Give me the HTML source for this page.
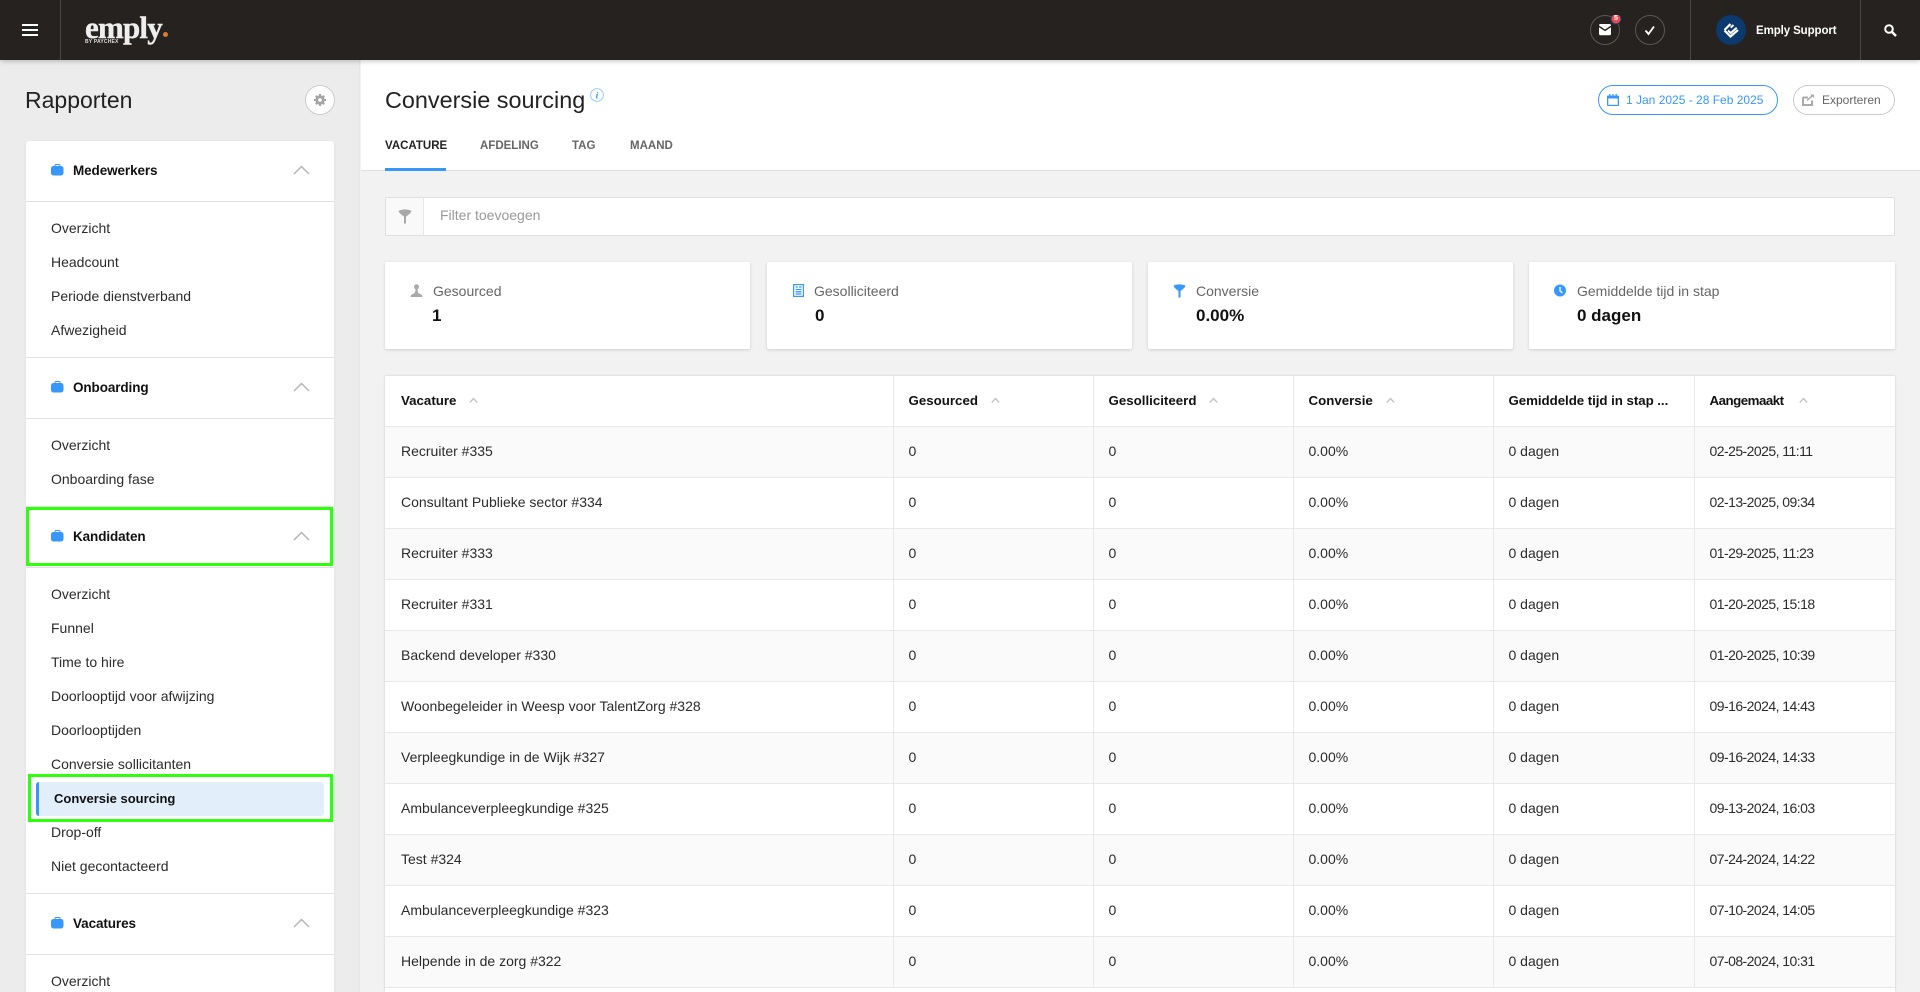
<!DOCTYPE html>
<html lang="nl"><head><meta charset="utf-8"><title>Conversie sourcing</title>
<style>
*{box-sizing:border-box}
html,body{margin:0;padding:0;width:1920px;height:992px;overflow:hidden;background:#f2f2f2;font-family:"Liberation Sans",Arial,sans-serif;color:#2b2b2b}
#root{position:relative;width:1920px;height:992px;overflow:hidden}
.a{position:absolute}
.t{position:absolute;white-space:nowrap;line-height:20px;height:20px}
#top{left:0;top:0;width:1920px;height:60px;background:#26221f;box-shadow:0 1px 5px rgba(0,0,0,.25);z-index:5}
.vd{position:absolute;top:0;width:1px;height:60px;background:#4a4643}
#side{left:0;top:60px;width:360px;height:932px;background:#ececec;border-right:1px solid #e6e6e6}
#card{left:26px;top:141px;width:308px;height:851px;background:#fff;border-radius:3px 3px 0 0;box-shadow:0 1px 2px rgba(0,0,0,.08)}
.hr{position:absolute;left:26px;width:308px;height:1px;background:#e2e2e2}
.it{position:absolute;left:51px;font-size:14px;white-space:nowrap;line-height:20px;height:20px;color:#2b2b2b}
.sh{position:absolute;left:73px;font-size:13.5px;letter-spacing:-.1px;font-weight:700;color:#111;white-space:nowrap;line-height:20px;height:20px;margin-top:1px}
.g{position:absolute;border:3px solid #2eff0a;z-index:3}
#head{left:361px;top:60px;width:1559px;height:111px;background:#fff;border-bottom:1px solid #e0e0e0}
.tab{position:absolute;top:136px;font-size:11.5px;font-weight:700;color:#666;line-height:20px;height:20px;white-space:nowrap}
.pill{position:absolute;top:85px;height:30px;border-radius:15px;background:#fff}
.sc{position:absolute;top:262px;height:87px;width:365px;background:#fff;border-radius:2px;box-shadow:0 1px 3px rgba(0,0,0,.15)}
.sl{position:absolute;top:281px;font-size:14px;color:#666;white-space:nowrap;line-height:20px}
.sv{position:absolute;top:305px;font-size:17px;font-weight:700;color:#111;white-space:nowrap;line-height:22px}
#tb{left:385px;top:376px;width:1510px;height:616px;background:#fff;box-shadow:0 0 2px rgba(0,0,0,.18)}
table{position:absolute;left:385px;top:376px;width:1510px;border-collapse:collapse;table-layout:fixed;font-size:14px}
th,td{padding:0 15px;text-align:left;border-bottom:1px solid #e8e8e8;border-right:1px solid #e8e8e8;white-space:nowrap;overflow:hidden}
th:first-child,td:first-child{padding-left:16px}
th{height:50px;font-size:13.3px;font-weight:700;color:#111}
td{height:51px;color:#2b2b2b;padding-bottom:1px}
td:last-child{letter-spacing:-.55px}
th:last-child{letter-spacing:-.5px}
th:last-child svg{margin-left:15px}
td:last-child,th:last-child{border-right:none}
tbody tr:nth-child(odd){background:#fafafa}
th svg{margin-left:13px;vertical-align:1px}
</style></head><body><div id="root">

<div id="top" class="a">
<div class="a" style="left:22px;top:24px;width:16px;height:2px;background:#fff"></div>
<div class="a" style="left:22px;top:29px;width:16px;height:2px;background:#fff"></div>
<div class="a" style="left:22px;top:34px;width:16px;height:2px;background:#fff"></div>
<div class="vd" style="left:60px"></div>
<div class="t" style="left:85px;top:11px;font:700 31px/34px 'Liberation Serif',serif;height:34px;color:#eee;letter-spacing:-.8px;-webkit-text-stroke:.4px #eee">emply</div>
<div class="a" style="left:163px;top:32px;width:5px;height:5px;border-radius:50%;background:#de7a35"></div>
<div class="t" style="left:85px;top:39px;font-size:5px;font-weight:700;line-height:6px;height:6px;color:#ddd;letter-spacing:.2px">BY PAYCHEX</div>

<svg class="a" style="left:1590px;top:15px" width="90" height="30" viewBox="0 0 90 30"><circle cx="15" cy="15" r="14.500" fill="none" stroke="#5b5753"/><circle cx="60" cy="15" r="14.500" fill="none" stroke="#5b5753"/><path d="M9 10.500q0-1.500 1.500-1.500h9q1.500 0 1.500 1.500L15 14.500z" fill="#fff"/><path d="M9 12.300L15 16.300l6-4V19q0 1.200-1.500 1.200h-9Q9 20.200 9 19z" fill="#fff"/><path d="M55.500 15.500l3 3.500 5.500-7.500" fill="none" stroke="#fff" stroke-width="1.800"/><circle cx="26" cy="4" r="5" fill="#ee4a55" stroke="#1f3d63"/></svg>
<div class="t" style="left:1613px;top:15px;width:6px;font-size:7px;font-weight:700;line-height:8px;height:8px;color:#fff;text-align:center">5</div>
<div class="vd" style="left:1690px"></div>
<svg class="a" style="left:1716px;top:15px" width="30" height="30" viewBox="0 0 30 30"><circle cx="15" cy="15" r="15" fill="#0c3a6e"/><path d="M8.500 15L14.500 9M8.500 15.500L14.500 21.500 22 15" fill="none" stroke="#fff" stroke-width="2.200"/><path d="M12 15.500l2.700 2.500 6-5.200M14.700 12.600L17.500 10" fill="none" stroke="#fff" stroke-width="2"/></svg>
<div class="t" style="left:1756px;top:21px;font-size:11.500px;font-weight:700;color:#fff;letter-spacing:-.1px">Emply Support</div>
<div class="vd" style="left:1860px"></div>
<svg class="a" style="left:1884px;top:24px" width="13" height="13" viewBox="0 0 13 13"><circle cx="5" cy="5" r="3.800" fill="none" stroke="#fff" stroke-width="2"/><path d="M8 8l4 4" stroke="#fff" stroke-width="2.500"/></svg>
</div>

<div id="side" class="a"></div>
<div class="t" style="left:25px;top:85px;height:30px;line-height:30px;font-size:23px;color:#222">Rapporten</div>
<div class="a" style="left:305px;top:85px;width:30px;height:30px;border-radius:50%;background:#fff;border:1px solid #ccc"></div>
<svg class="a" style="left:314px;top:94px" width="12" height="12" viewBox="0 0 12 12"><circle cx="6" cy="6" r="3.200" fill="none" stroke="#a5a5a5" stroke-width="2.800"/><path d="M6 0v2.500M6 9.500V12M0 6h2.500M9.500 6H12M1.800 1.800l1.800 1.800M8.400 8.400l1.800 1.800M10.200 1.800L8.400 3.600M3.600 8.400l-1.800 1.800" stroke="#a5a5a5" stroke-width="2.200"/></svg>

<div id="card" class="a"></div>
<div class="hr" style="top:201px"></div><div class="hr" style="top:357px"></div><div class="hr" style="top:418px"></div><div class="hr" style="top:506px"></div><div class="hr" style="top:567px"></div><div class="hr" style="top:893px"></div><div class="hr" style="top:954px"></div>

<svg width="0" height="0" style="position:absolute"><defs>
<g id="bag"><path d="M4 2.500V1.500Q4 .5 5 .5h3q1 0 1 1v1" fill="none" stroke="#3797fb" stroke-width="1"/><rect x="0" y="2" width="12.500" height="9.500" rx="2.500" fill="#3797fb"/></g>
<g id="chev"><path d="M1 9L8.500 1.500 16 9" fill="none" stroke="#b5b5b5" stroke-width="1.500"/></g>
<g id="sort"><path d="M.8 5.500L4.500 1.500 8.200 5.500" fill="none" stroke="#c4c4c4" stroke-width="1.400"/></g>
</defs></svg>

<svg class="a" style="left:51px;top:164px" width="13" height="12"><use href="#bag"/></svg><div class="sh" style="top:160px">Medewerkers</div><svg class="a" style="left:293px;top:165px" width="17" height="10"><use href="#chev"/></svg>
<div class="it" style="top:218px">Overzicht</div><div class="it" style="top:252px">Headcount</div><div class="it" style="top:286px">Periode dienstverband</div><div class="it" style="top:320px">Afwezigheid</div>
<svg class="a" style="left:51px;top:381px" width="13" height="12"><use href="#bag"/></svg><div class="sh" style="top:377px">Onboarding</div><svg class="a" style="left:293px;top:382px" width="17" height="10"><use href="#chev"/></svg>
<div class="it" style="top:435px">Overzicht</div><div class="it" style="top:469px">Onboarding fase</div>
<svg class="a" style="left:51px;top:530px" width="13" height="12"><use href="#bag"/></svg><div class="sh" style="top:526px">Kandidaten</div><svg class="a" style="left:293px;top:531px" width="17" height="10"><use href="#chev"/></svg>
<div class="it" style="top:584px">Overzicht</div><div class="it" style="top:618px">Funnel</div><div class="it" style="top:652px">Time to hire</div><div class="it" style="top:686px">Doorlooptijd voor afwijzing</div><div class="it" style="top:720px">Doorlooptijden</div><div class="it" style="top:754px">Conversie sollicitanten</div>
<div class="a" style="left:36px;top:782px;width:288px;height:34px;background:#e2effb;border-radius:3px;border-left:3px solid #3797fb"></div>
<div class="it" style="left:54px;top:789px;font-weight:700;color:#111;font-size:13px">Conversie sourcing</div>
<div class="it" style="top:822px">Drop-off</div><div class="it" style="top:856px">Niet gecontacteerd</div>
<svg class="a" style="left:51px;top:917px" width="13" height="12"><use href="#bag"/></svg><div class="sh" style="top:913px">Vacatures</div><svg class="a" style="left:293px;top:918px" width="17" height="10"><use href="#chev"/></svg>
<div class="it" style="top:971px">Overzicht</div>
<div class="g" style="left:26px;top:507px;width:307px;height:59px"></div>
<div class="g" style="left:28px;top:774px;width:305px;height:48px"></div>

<div id="head" class="a"></div>
<div class="t" style="left:385px;top:85px;height:30px;line-height:30px;font-size:23.400px;color:#222">Conversie sourcing</div>
<svg class="a" style="left:590px;top:88px" width="14" height="14" viewBox="0 0 14 14"><circle cx="7" cy="7" r="6.400" fill="#fff" stroke="#9ccafa"/><text x="7" y="10.500" text-anchor="middle" font-size="9.500" font-weight="700" font-style="italic" font-family="Liberation Serif" fill="#3797fb">i</text></svg>
<div class="tab" style="left:385px;color:#222">VACATURE</div><div class="tab" style="left:480px">AFDELING</div><div class="tab" style="left:572px">TAG</div><div class="tab" style="left:630px">MAAND</div>
<div class="a" style="left:385px;top:168px;width:61px;height:3px;background:#3797fb"></div>

<div class="pill" style="left:1598px;width:180px;border:1px solid #3797fb"></div>
<svg class="a" style="left:1607px;top:94px" width="12" height="12" viewBox="0 0 12 12"><path d="M0 2.500Q0 1.500 1 1.500h10q1 0 1 1V11q0 1-1 1H1q-1 0-1-1z" fill="#3797fb"/><rect x="1.300" y="4.500" width="9.400" height="6.300" fill="#fff"/><path d="M2.800 0v2.500M6 0v2.500M9.200 0v2.500" stroke="#3797fb" stroke-width="1.200"/></svg>
<div class="t" style="left:1626px;top:90px;font-size:12px;color:#3797fb">1 Jan 2025 - 28 Feb 2025</div>
<div class="pill" style="left:1793px;width:102px;border:1px solid #ccc"></div>
<svg class="a" style="left:1802px;top:94px" width="12" height="12" viewBox="0 0 12 12"><path d="M1 3.500h5M1 3v8h9V6.500" fill="none" stroke="#aaa" stroke-width="2"/><path d="M5 6.500L10 2" stroke="#aaa" stroke-width="1.500"/><path d="M8 .5h4v3.500z" fill="#aaa"/></svg>
<div class="t" style="left:1822px;top:90px;font-size:12px;color:#666">Exporteren</div>

<div class="a" style="left:385px;top:197px;width:1510px;height:39px;background:#fff;border:1px solid #dfdfdf;border-radius:2px"></div>
<div class="a" style="left:386px;top:198px;width:38px;height:37px;background:#f9f9f9;border-right:1px solid #e6e6e6"></div>
<svg class="a" style="left:398px;top:209px" width="14" height="15" viewBox="0 0 14 15"><path d="M.5 1.800Q7-1 13.500 1.800Q13 4.500 8 7.500V14.500H6V7.500Q1 4.500.5 1.800z" fill="#a8a8a8"/></svg>
<div class="t" style="left:440px;top:205px;font-size:14px;color:#999">Filter toevoegen</div>

<div class="sc" style="left:385px"></div><div class="sc" style="left:767px"></div><div class="sc" style="left:1148px"></div><div class="sc" style="left:1529px;width:366px"></div>
<svg class="a" style="left:410px;top:284px" width="13" height="13" viewBox="0 0 13 13"><circle cx="6.500" cy="2.800" r="2.500" fill="#aaa"/><path d="M0.500 13Q0.500 10.500 4 9.500Q5.500 8.500 5.500 5h2Q7.500 8.500 9 9.500 12.500 10.500 12.500 13z" fill="#aaa"/></svg>
<div class="sl" style="left:433px">Gesourced</div><div class="sv" style="left:432px">1</div>
<svg class="a" style="left:793px;top:284px" width="11" height="13" viewBox="0 0 11 13"><rect x=".6" y=".6" width="9.800" height="11.800" fill="none" stroke="#3797fb" stroke-width="1.200"/><path d="M2.500 3h2.200M6 3h2.500M2.500 5.500h6M2.500 7.800h6M2.500 10h6" stroke="#3797fb" stroke-width="1.300"/></svg>
<div class="sl" style="left:814px">Gesolliciteerd</div><div class="sv" style="left:815px">0</div>
<svg class="a" style="left:1173px;top:284px" width="13" height="14" viewBox="0 0 13 14"><path d="M.5 1.500Q6.500-.8 12.500 1.500Q12 4 7.500 7V13.500H5.500V7Q1 4 .5 1.500z" fill="#3797fb"/></svg>
<div class="sl" style="left:1196px">Conversie</div><div class="sv" style="left:1196px">0.00%</div>
<svg class="a" style="left:1554px;top:284px" width="12" height="13" viewBox="0 0 12 13"><circle cx="6" cy="6.500" r="6" fill="#3797fb"/><path d="M6 3v4l2.500 2" fill="none" stroke="#fff" stroke-width="1.300"/></svg>
<div class="sl" style="left:1577px">Gemiddelde tijd in stap</div><div class="sv" style="left:1577px">0 dagen</div>

<div id="tb" class="a"></div>
<table><colgroup><col style="width:508px"><col style="width:200px"><col style="width:200px"><col style="width:200px"><col style="width:201px"><col style="width:201px"></colgroup>
<thead><tr>
<th>Vacature<svg width="9" height="7"><use href="#sort"/></svg></th>
<th>Gesourced<svg width="9" height="7"><use href="#sort"/></svg></th>
<th>Gesolliciteerd<svg width="9" height="7"><use href="#sort"/></svg></th>
<th>Conversie<svg width="9" height="7"><use href="#sort"/></svg></th>
<th style="letter-spacing:-.05px">Gemiddelde tijd in stap ...</th>
<th>Aangemaakt<svg width="9" height="7"><use href="#sort"/></svg></th>
</tr></thead>
<tbody>
<tr><td>Recruiter #335</td><td>0</td><td>0</td><td>0.00%</td><td>0 dagen</td><td>02-25-2025, 11:11</td></tr>
<tr><td>Consultant Publieke sector #334</td><td>0</td><td>0</td><td>0.00%</td><td>0 dagen</td><td>02-13-2025, 09:34</td></tr>
<tr><td>Recruiter #333</td><td>0</td><td>0</td><td>0.00%</td><td>0 dagen</td><td>01-29-2025, 11:23</td></tr>
<tr><td>Recruiter #331</td><td>0</td><td>0</td><td>0.00%</td><td>0 dagen</td><td>01-20-2025, 15:18</td></tr>
<tr><td>Backend developer #330</td><td>0</td><td>0</td><td>0.00%</td><td>0 dagen</td><td>01-20-2025, 10:39</td></tr>
<tr><td>Woonbegeleider in Weesp voor TalentZorg #328</td><td>0</td><td>0</td><td>0.00%</td><td>0 dagen</td><td>09-16-2024, 14:43</td></tr>
<tr><td>Verpleegkundige in de Wijk #327</td><td>0</td><td>0</td><td>0.00%</td><td>0 dagen</td><td>09-16-2024, 14:33</td></tr>
<tr><td>Ambulanceverpleegkundige #325</td><td>0</td><td>0</td><td>0.00%</td><td>0 dagen</td><td>09-13-2024, 16:03</td></tr>
<tr><td>Test #324</td><td>0</td><td>0</td><td>0.00%</td><td>0 dagen</td><td>07-24-2024, 14:22</td></tr>
<tr><td>Ambulanceverpleegkundige #323</td><td>0</td><td>0</td><td>0.00%</td><td>0 dagen</td><td>07-10-2024, 14:05</td></tr>
<tr><td>Helpende in de zorg #322</td><td>0</td><td>0</td><td>0.00%</td><td>0 dagen</td><td>07-08-2024, 10:31</td></tr>
</tbody></table>
</div></body></html>
